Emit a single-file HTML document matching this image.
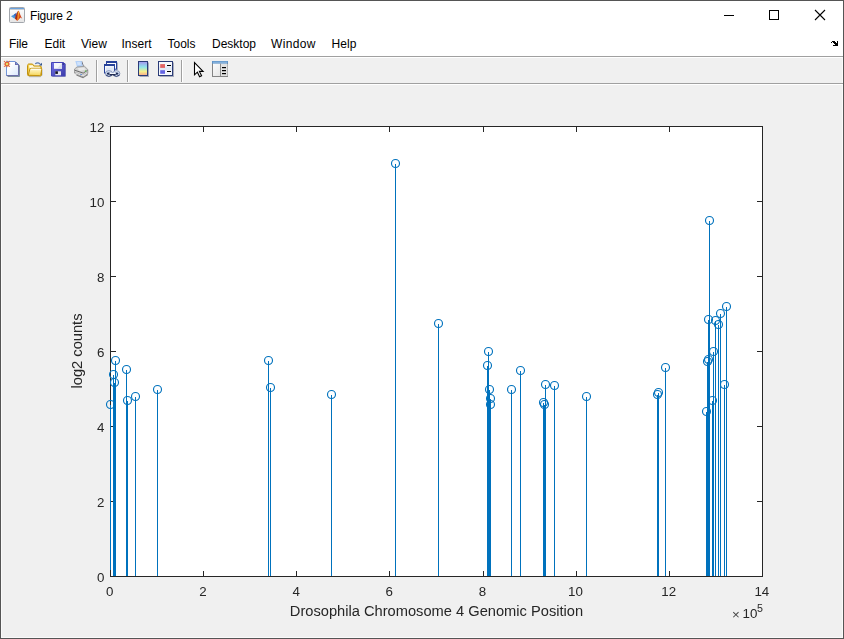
<!DOCTYPE html>
<html><head><meta charset="utf-8"><title>Figure 2</title>
<style>
html,body{margin:0;padding:0;}
body{width:844px;height:639px;overflow:hidden;background:#f0f0f0;position:relative;font-family:"Liberation Sans",Arial,sans-serif;}
.abs{position:absolute;}
.title{left:1px;top:1px;width:842px;height:30px;background:#fff;}
.menubar{left:1px;top:31px;width:842px;height:25px;background:#fff;}
.title span{position:absolute;letter-spacing:-0.2px;left:29px;top:8px;font-size:12px;color:#000;white-space:nowrap;line-height:14px;}
.menubar span{position:absolute;top:6px;font-size:12px;color:#000;white-space:nowrap;line-height:14px;}
.plot{position:absolute;left:0;top:0;will-change:transform;}
</style></head><body>
<div class="abs title"><span>Figure 2</span></div>
<div class="abs menubar">
<span style="left:8px;letter-spacing:-0.15px">File</span><span style="left:43.5px">Edit</span><span style="left:80px">View</span><span style="left:120.5px">Insert</span><span style="left:166.5px">Tools</span><span style="left:211px">Desktop</span><span style="left:270px;letter-spacing:0.35px">Window</span><span style="left:330.5px;letter-spacing:0.1px">Help</span>
</div>
<div class="abs" style="left:842px;top:57px;width:1px;height:581px;background:#fafafa"></div>
<div class="abs" style="left:1px;top:57px;width:1px;height:581px;background:#fafafa"></div>
<div class="abs" style="left:1px;top:56px;width:842px;height:1px;background:#a0a0a0"></div>
<div class="abs" style="left:1px;top:57px;width:842px;height:1px;background:#fff"></div>
<div class="abs" style="left:1px;top:83px;width:842px;height:1px;background:#a0a0a0"></div>
<div class="abs" style="left:1px;top:84px;width:842px;height:1px;background:#fff"></div>
<svg class="plot" width="844" height="639" viewBox="0 0 844 639"><rect x="110.5" y="126.5" width="652.0" height="450.0" fill="#fff" stroke="#262626" stroke-width="1" shape-rendering="crispEdges"/><path d="M110.5 577.0v-6M110.5 126.0v6M203.5 577.0v-6M203.5 126.0v6M296.5 577.0v-6M296.5 126.0v6M389.5 577.0v-6M389.5 126.0v6M483.5 577.0v-6M483.5 126.0v6M576.5 577.0v-6M576.5 126.0v6M669.5 577.0v-6M669.5 126.0v6M762.5 577.0v-6M762.5 126.0v6M110.0 576.5h6M763.0 576.5h-6M110.0 501.5h6M763.0 501.5h-6M110.0 426.5h6M763.0 426.5h-6M110.0 351.5h6M763.0 351.5h-6M110.0 276.5h6M763.0 276.5h-6M110.0 201.5h6M763.0 201.5h-6M110.0 126.5h6M763.0 126.5h-6" stroke="#262626" stroke-width="1" fill="none" shape-rendering="crispEdges"/><path d="M110.5 576.0V404.5M113.5 576.0V374.5M114.5 576.0V382.5M115.5 576.0V360.5M126.5 576.0V369.5M127.5 576.0V400.5M135.5 576.0V396.5M157.5 576.0V389.5M268.5 576.0V360.5M270.5 576.0V387.5M331.5 576.0V394.5M395.5 576.0V163.5M438.5 576.0V323.5M487.5 576.0V365.5M488.5 576.0V351.5M489.5 576.0V389.5M490.5 576.0V398.5M490.5 576.0V404.5M511.5 576.0V389.5M520.5 576.0V370.5M543.5 576.0V402.5M544.5 576.0V404.5M545.5 576.0V384.5M554.5 576.0V385.5M586.5 576.0V396.5M657.5 576.0V394.5M658.5 576.0V392.5M665.5 576.0V367.5M706.5 576.0V411.5M707.5 576.0V361.5M708.5 576.0V359.5M708.5 576.0V319.5M709.5 576.0V220.5M712.5 576.0V400.5M713.5 576.0V351.5M715.5 576.0V320.5M718.5 576.0V324.5M720.5 576.0V313.5M724.5 576.0V384.5M726.5 576.0V306.5" stroke="#0072BD" stroke-width="1" fill="none" shape-rendering="crispEdges"/><g fill="none" stroke="#0072BD" stroke-width="1.15"><circle cx="110.5" cy="404.5" r="4"/><circle cx="113.5" cy="374.5" r="4"/><circle cx="114.5" cy="382.5" r="4"/><circle cx="115.5" cy="360.5" r="4"/><circle cx="126.5" cy="369.5" r="4"/><circle cx="127.5" cy="400.5" r="4"/><circle cx="135.5" cy="396.5" r="4"/><circle cx="157.5" cy="389.5" r="4"/><circle cx="268.5" cy="360.5" r="4"/><circle cx="270.5" cy="387.5" r="4"/><circle cx="331.5" cy="394.5" r="4"/><circle cx="395.5" cy="163.5" r="4"/><circle cx="438.5" cy="323.5" r="4"/><circle cx="487.5" cy="365.5" r="4"/><circle cx="488.5" cy="351.5" r="4"/><circle cx="489.5" cy="389.5" r="4"/><circle cx="490.5" cy="398.5" r="4"/><circle cx="490.5" cy="404.5" r="4"/><circle cx="511.5" cy="389.5" r="4"/><circle cx="520.5" cy="370.5" r="4"/><circle cx="543.5" cy="402.5" r="4"/><circle cx="544.5" cy="404.5" r="4"/><circle cx="545.5" cy="384.5" r="4"/><circle cx="554.5" cy="385.5" r="4"/><circle cx="586.5" cy="396.5" r="4"/><circle cx="657.5" cy="394.5" r="4"/><circle cx="658.5" cy="392.5" r="4"/><circle cx="665.5" cy="367.5" r="4"/><circle cx="706.5" cy="411.5" r="4"/><circle cx="707.5" cy="361.5" r="4"/><circle cx="708.5" cy="359.5" r="4"/><circle cx="708.5" cy="319.5" r="4"/><circle cx="709.5" cy="220.5" r="4"/><circle cx="712.5" cy="400.5" r="4"/><circle cx="713.5" cy="351.5" r="4"/><circle cx="715.5" cy="320.5" r="4"/><circle cx="718.5" cy="324.5" r="4"/><circle cx="720.5" cy="313.5" r="4"/><circle cx="724.5" cy="384.5" r="4"/><circle cx="726.5" cy="306.5" r="4"/></g><path d="M110.5 577.0v-7" stroke="#262626" stroke-width="1" shape-rendering="crispEdges"/><g font-family="Liberation Sans, Arial, sans-serif" font-size="13.33px" fill="#262626"><text x="109.8" y="596.3" text-anchor="middle">0</text><text x="202.9" y="596.3" text-anchor="middle">2</text><text x="296.1" y="596.3" text-anchor="middle">4</text><text x="389.2" y="596.3" text-anchor="middle">6</text><text x="482.4" y="596.3" text-anchor="middle">8</text><text x="575.5" y="596.3" text-anchor="middle">10</text><text x="668.7" y="596.3" text-anchor="middle">12</text><text x="761.8" y="596.3" text-anchor="middle">14</text><text x="104.4" y="582.0" text-anchor="end">0</text><text x="104.4" y="507.0" text-anchor="end">2</text><text x="104.4" y="432.0" text-anchor="end">4</text><text x="104.4" y="357.0" text-anchor="end">6</text><text x="104.4" y="282.0" text-anchor="end">8</text><text x="104.4" y="207.0" text-anchor="end">10</text><text x="104.4" y="132.0" text-anchor="end">12</text><text x="732" y="619.3" fill-opacity="0.85">×</text><text x="742.5" y="618">10</text><text x="757" y="612.3" font-size="10.67px">5</text></g><g font-family="Liberation Sans, Arial, sans-serif" font-size="14.67px" fill="#262626"><text x="436.5" y="616" text-anchor="middle">Drosophila Chromosome 4 Genomic Position</text><text transform="translate(82,351) rotate(-90)" text-anchor="middle">log2 counts</text></g></svg>
<svg class="abs" style="left:0;top:0" width="844" height="90" viewBox="0 0 844 90">
<defs>
<linearGradient id="gpage" x1="0" y1="0" x2="1" y2="1"><stop offset="0.3" stop-color="#ffffff"/><stop offset="1" stop-color="#d8e8fc"/></linearGradient>
<linearGradient id="gfold" x1="0" y1="0" x2="0" y2="1"><stop offset="0" stop-color="#fffad8"/><stop offset="1" stop-color="#f6d658"/></linearGradient>
<linearGradient id="gsave" x1="0" y1="0" x2="1" y2="1"><stop offset="0" stop-color="#7474e6"/><stop offset="1" stop-color="#3a3aa8"/></linearGradient>
<linearGradient id="gcb" x1="0" y1="0" x2="0" y2="1"><stop offset="0" stop-color="#a594ee"/><stop offset="0.4" stop-color="#8fe6ea"/><stop offset="0.72" stop-color="#f6f08c"/><stop offset="1" stop-color="#f8a88c"/></linearGradient>
<linearGradient id="gwin" x1="0" y1="0" x2="1" y2="1"><stop offset="0" stop-color="#ffffff"/><stop offset="1" stop-color="#dbe4f2"/></linearGradient>
<linearGradient id="gprop" x1="0" y1="0" x2="1" y2="1"><stop offset="0" stop-color="#ffffff"/><stop offset="1" stop-color="#dcdcdc"/></linearGradient>
<linearGradient id="gmat" x1="0" y1="0" x2="0" y2="1"><stop offset="0" stop-color="#ffffff"/><stop offset="1" stop-color="#e4e4e4"/></linearGradient>
</defs>
<!-- toolbar separators -->
<g shape-rendering="crispEdges">
<rect x="96" y="60" width="1" height="22" fill="#a0a0a0"/><rect x="97" y="60" width="1" height="22" fill="#ffffff"/>
<rect x="127" y="60" width="1" height="22" fill="#a0a0a0"/><rect x="128" y="60" width="1" height="22" fill="#ffffff"/>
<rect x="181" y="60" width="1" height="22" fill="#a0a0a0"/><rect x="182" y="60" width="1" height="22" fill="#ffffff"/>
</g>
<!-- new doc -->
<g>
<path d="M7.5 76.5H19.5V65.5L16 62" fill="none" stroke="#6e8494" stroke-width="1" opacity="0.9"/>
<path d="M6.5 61.5H15L18.5 65V75.5H6.5z" fill="url(#gpage)" stroke="#7197da" stroke-width="1"/>
<path d="M18.500 64.500V75.500H6.500" fill="none" stroke="#6c6ea8" stroke-width="1"/>
<path d="M15 61.200V65H18.800z" fill="#6a6cae"/>
<rect x="16" y="63" width="1" height="1" fill="#7aa0e0"/>
<g fill="#e46a3a"><rect x="4.700" y="61.800" width="4.600" height="4.600" rx="1"/><circle cx="4.400" cy="61.400" r="0.600"/><circle cx="9.500" cy="61.400" r="0.600"/><circle cx="4.400" cy="66.500" r="0.600"/><circle cx="9.500" cy="66.500" r="0.600"/><rect x="6.300" y="60.700" width="1.400" height="1" opacity="0.700"/><rect x="3.800" y="63.400" width="1" height="1.400" opacity="0.700"/><rect x="9.200" y="63.400" width="1" height="1.400" opacity="0.600"/><rect x="6.300" y="66.300" width="1.400" height="1" opacity="0.600"/></g>
<rect x="6" y="63.100" width="2" height="1.900" fill="#e4e464"/>
</g>
<!-- open folder -->
<g>
<path d="M29 76.700h11.500l1.500-1.500v-5" fill="none" stroke="#7a8ca8" stroke-width="1" opacity="0.550"/>
<path d="M27.500 74.500v-9q0-1 1-1.500h4l1.500 2h6q1.500 0 1.500 1.500v7.500q0 0.800-1 0.800h-11.500q-1.500 0-1.500-1.300z" fill="#f3cf50" stroke="#c2920e" stroke-width="1"/>
<path d="M29 65.300h3.700l1 1.500h6.300v1.400h-10.500z" fill="#fffbe4"/>
<path d="M28.300 75.300l1.500-6q0.300-1 1.300-1h9.900q1 0 0.800 1l-1 5.500q-0.200 0.800-1.200 0.800z" fill="url(#gfold)" stroke="#c2920e" stroke-width="1"/>
<path d="M31 69.300h9.500" stroke="#fffef2" stroke-width="1.200"/>
<path d="M35.200 63.700q2.700-1.900 5 0.400" fill="none" stroke="#5878b0" stroke-width="1.100"/>
<path d="M42 62.800V65.600H39z" fill="#34548e"/>
</g>
<!-- save -->
<g>
<rect x="52.5" y="63.5" width="13.5" height="13.5" fill="#55608a" opacity="0.45"/>
<path d="M51.500 62.500h12l1.500 1.500v12h-13.500z" fill="url(#gsave)" stroke="#4545b8" stroke-width="1"/>
<rect x="54" y="63" width="8" height="5.800" fill="#f4f6fb"/>
<path d="M62 63v5.800h-5z" fill="#d6dcec" opacity="0.8"/>
<rect x="55.300" y="71.300" width="5.700" height="4" fill="#e8e8ee"/>
<rect x="55.300" y="71.300" width="2.600" height="2.600" fill="#101020"/>
<rect x="62.700" y="63" width="1" height="2" fill="#2a2a80"/>
</g>
<!-- print -->
<g>
<path d="M76.500 75l6.500 2.600 4.700-3" fill="none" stroke="#303030" stroke-width="1.200" opacity="0.600"/>
<path d="M81.700 61.200l1.800 5.300" stroke="#4c4c5c" stroke-width="1" opacity="0.800"/>
<path d="M75.300 61h6.300l1.200 6-5.600 0.700z" fill="#b2d0f8"/>
<path d="M77 62h3.500l0.500 3h-3.500z" fill="#cfe2fb"/>
<path d="M74.500 69l2.500-2 7.500-0.700 3.300 3.200v4l-4.300 3.300-9-3.800z" fill="#d2d2d2" stroke="#909090" stroke-width="0.800"/>
<path d="M77.300 68.200l6.500-0.700 2 2-6 1.500z" fill="#e9e9e9"/>
<path d="M74.700 70.200l8.500 2.900 4.400-2.800" fill="none" stroke="#6c6c6c" stroke-width="1"/>
<path d="M75 72.300l8.300 2.800 4.200-2.800v1.300l-4 3-8.500-3z" fill="#fbfbfb" stroke="#7c7c7c" stroke-width="0.400"/>
<rect x="85" y="70.400" width="1.200" height="1.300" fill="#5cc04a"/>
<rect x="80.300" y="74.200" width="1.600" height="0.800" fill="#4a80d8"/>
</g>
<!-- link plots -->
<g>
<rect x="117" y="62.500" width="1" height="7.500" fill="#55608a" opacity="0.450"/>
<rect x="106.500" y="62" width="10" height="7.200" fill="#fdfdfe" stroke="#27429a" stroke-width="1"/>
<rect x="106" y="61" width="11" height="2" fill="#27429a"/>
<rect x="104.500" y="65" width="10" height="8" fill="url(#gwin)" stroke="#27429a" stroke-width="1"/>
<rect x="104" y="64" width="11" height="2" fill="#27429a"/>
<rect x="106" y="67.500" width="6.500" height="3.500" fill="#dfe7f5"/>
<ellipse cx="108.900" cy="73.600" rx="3.500" ry="3" fill="#d4e0f2" stroke="#5a6c9c" stroke-width="0.600"/>
<ellipse cx="116.400" cy="73.600" rx="3.500" ry="3" fill="#d4e0f2" stroke="#5a6c9c" stroke-width="0.600"/>
<path d="M105.800 75q3 2.800 6.300 0M113.300 75q3 2.800 6.300 0" fill="none" stroke="#2a3a6c" stroke-width="0.900"/>
<ellipse cx="108.700" cy="73.700" rx="1.900" ry="1.100" fill="#1c2a58"/>
<ellipse cx="116.600" cy="73.700" rx="1.900" ry="1.100" fill="#1c2a58"/>
<rect x="109.500" y="72.700" width="6.300" height="1.400" fill="#f2f6fc"/>
<rect x="109.800" y="74.100" width="5.700" height="1.100" fill="#141e44"/>
</g>
<!-- colorbar -->
<g>
<rect x="139.500" y="62.500" width="9.500" height="14.500" fill="#6b7390" opacity="0.550"/>
<rect x="138.500" y="61.500" width="9" height="14" fill="url(#gcb)" stroke="#2b3c78" stroke-width="1"/>
</g>
<!-- legend -->
<g>
<rect x="159.500" y="62.500" width="14.500" height="14.500" fill="#6b7390" opacity="0.550"/>
<rect x="158.500" y="61.500" width="14" height="14" fill="#f4f7fc" stroke="#2b3c78" stroke-width="1"/>
<rect x="159" y="66.500" width="13" height="3.500" fill="#e3eaf6"/>
<rect x="160.200" y="64.100" width="4.800" height="3.800" fill="#e26464"/>
<rect x="160.200" y="70.200" width="4.800" height="3.600" fill="#6464e2"/>
<rect x="167" y="65" width="4" height="1" fill="#000"/>
<rect x="167" y="71" width="4" height="1" fill="#000"/>
</g>
<!-- pointer -->
<path d="M194.500 62.500v12.300l2.900-2.600 2.200 4.500 2-1-2.200-4.300h3.700z" fill="#fff" stroke="#000" stroke-width="1.100" stroke-linejoin="miter"/>
<!-- property inspector -->
<g>
<rect x="212.500" y="61.500" width="15" height="15" fill="url(#gprop)" stroke="#848484" stroke-width="1"/>
<rect x="212" y="61" width="16" height="2.600" fill="#5f94c8"/>
<rect x="213" y="61.800" width="14" height="0.800" fill="#9cc4e8"/>
<rect x="220.500" y="64" width="7" height="12" fill="#e2e2e2"/>
<rect x="220" y="63.600" width="1" height="12.500" fill="#8c8c8c"/>
<rect x="222" y="67" width="4" height="1.200" fill="#000"/>
<rect x="222" y="70" width="4" height="1.200" fill="#000"/>
<rect x="222" y="73" width="4" height="1.200" fill="#000"/>
</g>
<!-- window controls -->
<g stroke="#000" stroke-width="1" fill="none">
<path d="M724 15.500h10" shape-rendering="crispEdges"/>
<rect x="769.500" y="10.500" width="9" height="9" shape-rendering="crispEdges"/>
<path d="M815 10l10 10M825 10l-10 10" stroke-width="1.100"/>
</g>
<!-- dock arrow -->
<path d="M832 41h1v1h-1zM833 41h1v1h-1zM834 41h1v1h-1zM837 41h1v1h-1zM831 42h1v1h-1zM833 42h1v1h-1zM834 42h1v1h-1zM835 42h1v1h-1zM837 42h1v1h-1zM834 43h1v1h-1zM835 43h1v1h-1zM836 43h1v1h-1zM837 43h1v1h-1zM835 44h1v1h-1zM836 44h1v1h-1zM837 44h1v1h-1zM833 45h1v1h-1zM834 45h1v1h-1zM835 45h1v1h-1zM836 45h1v1h-1zM837 45h1v1h-1z" fill="#000" shape-rendering="crispEdges"/>
<!-- matlab icon -->
<g>
<rect x="9.500" y="7.500" width="15" height="15" rx="1" fill="url(#gmat)" stroke="#a2a6ac" stroke-width="1"/>
<rect x="10" y="8" width="14" height="1.100" fill="#6aa2de"/>
<rect x="10" y="9.100" width="14" height="0.700" fill="#b8bcc2"/>
<path d="M11 16.300L16.300 13.200 15.200 17.800 14.600 18.700z" fill="#4a98dc"/>
<path d="M14 14.600L16.800 12.400 15.400 17.800z" fill="#3c60b4"/>
<path d="M15 18.600L16.600 14 18 11 18.800 10.800 19.800 13.500 20.800 16 22.200 18.800 20.600 17.600 19.400 18.800 17.400 20.800 16.400 20.200z" fill="#d2421a"/>
<path d="M15 18.600L16.600 14 18 11 17.600 15 16.600 19.800z" fill="#9c2c18"/>
<path d="M18.200 11L19 12 19.400 16 18.600 19.600 17.200 20.600 17.600 15z" fill="#f08a24"/>
<path d="M18.300 11.200L18.900 12.200 18.800 14.600 18.200 14.800z" fill="#f8cc40"/>
</g>
</svg>

<div class="abs" style="left:0;top:637px;width:843px;height:1px;background:#fafafa"></div>
<div class="abs" style="left:0;top:0;width:844px;height:1px;background:#555"></div>
<div class="abs" style="left:0;top:638px;width:844px;height:1px;background:#555"></div>
<div class="abs" style="left:0;top:0;width:1px;height:639px;background:#555"></div>
<div class="abs" style="left:843px;top:0;width:1px;height:639px;background:#555"></div>
</body></html>
